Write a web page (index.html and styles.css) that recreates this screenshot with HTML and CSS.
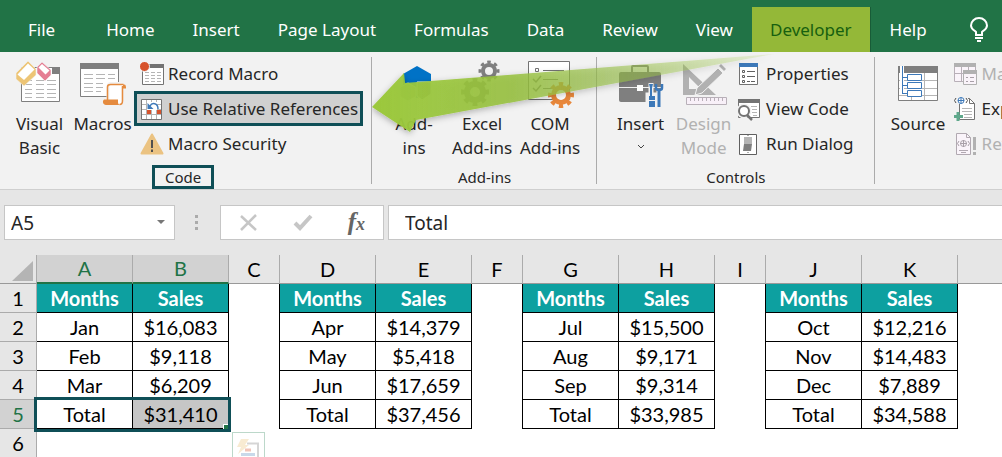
FILE: index.html
```
<!DOCTYPE html>
<html lang="en">
<head>
  <meta charset="UTF-8">
  <title>Monthly Sales - Excel</title>
  <link rel="stylesheet" href="styles.css">
</head>
<body>

<nav class="tabs">
  <a href="#" class="file">File</a>
  <a href="#">Home</a>
  <a href="#">Insert</a>
  <a href="#">Page Layout</a>
  <a href="#">Formulas</a>
  <a href="#">Data</a>
  <a href="#">Review</a>
  <a href="#">View</a>
  <a href="#" class="active">Developer</a>
  <a href="#">Help</a>
  <button class="tell-me" aria-label="Tell me what you want to do">
    <svg width="18" height="26" viewBox="0 0 18 26" fill="none" stroke="#fff" stroke-width="2">
      <path d="M6 18v-3C4 13 1 12 1 8.500a8 7.500 0 0 1 16 0C17 12 14 13 12 15v3z"/>
      <path d="M5 21h8M7 24h4"/>
    </svg>
  </button>
</nav>

<div class="ribbon">
  <section class="group code">
    <div class="group-body">
      <button class="big">
        <svg width="48" height="48" viewBox="0 0 48 48">
          <path d="M5.500 7.500h38v34h-38z" fill="#fff" stroke="#7f7f7f"/>
          <path d="M36 7h8v7h-8z" fill="#7f7f7f"/>
          <path d="M9 20.500h7m4 0h8m3 0h9M9 24.500h7m4 0h8m3 0h9M9 29.500h7m4 0h8m3 0h9M9 33.500h7m4 0h8m3 0h9M9 37.500h7m4 0h8m3 0h9" stroke="#b5b5b5"/>
          <path d="M0 13L12 1l8 8v6L8 26l-8-7z" fill="#edc576" stroke="#f2f2f2" stroke-width=".6"/>
          <path d="M1.500 14.500L12 3.500l6.500 6L8 20z" fill="#fff"/>
          <path d="M21 7l5-5 9 8v5l-6 6-8-8z" fill="#e57f94" stroke="#f2f2f2" stroke-width=".6"/>
          <path d="M22.500 7.500l3.500-3.500 7.500 6.500-4 4z" fill="#fff"/>
        </svg>
        <span>Visual<br>Basic</span>
      </button>
      <button class="big">
        <svg width="48" height="48" viewBox="0 0 48 48">
          <path d="M1.500 3.500h38v33h-38z" fill="#fff" stroke="#7f7f7f"/>
          <path d="M1 3h39v6H1z" fill="#7f7f7f"/>
          <path d="M5 14.500h9m3 0h9m3 0h7M5 18.500h9m3 0h9m3 0h7M5 23.500h9m3 0h7M5 27.500h9m3 0h7M5 31.500h9m3 0h5" stroke="#b5b5b5"/>
          <path d="M26 40h3V27c0-3 1-3.500 3-3.500h13.500c2 0 2 2 2 5H44v12c0 4-1 5-4 5H27c-3 0-3-5-1-5.500z" fill="#fff" stroke="#f2f2f2" stroke-width="3"/>
          <path d="M25 39.500h14V42c0 2 1 3 2 3H27c-3 0-4-4-2-5.500z" fill="#e58b3f"/>
          <path d="M44 24.500h1c2 0 2 2 2 4h-3z" fill="#e58b3f"/>
          <path d="M28.500 40V27c0-2 1-2.500 3-2.500h13M43.500 26v15c0 2-1 3.500-3 3.500" fill="none" stroke="#e58b3f" stroke-width="1.500"/>
        </svg>
        <span>Macros</span>
      </button>
      <div class="small-list">
        <button class="small">
          <svg width="24" height="24" viewBox="0 0 24 24">
            <path d="M2.500 2.500h21v20h-21z" fill="#fff" stroke="#737373"/>
            <path d="M2 2h22v4H2z" fill="#737373"/>
            <path d="M5 10.500h4m2 0h4m2 0h4M5 13.500h4m2 0h4m2 0h4M5 16.500h4m2 0h4m2 0h4M5 19.500h4m2 0h4m2 0h4" stroke="#b5b5b5"/>
            <circle cx="4.500" cy="4.500" r="5" fill="#d7532c" stroke="#f2f2f2"/>
          </svg>
          <span>Record Macro</span>
        </button>
        <button class="small marked">
          <svg width="24" height="24" viewBox="0 0 24 24">
            <path d="M1.500 2.500h20v20h-20z" fill="#fff" stroke="#737373"/>
            <path d="M6.500 3v19M11.500 3v19M16.500 3v19M2 7.500h19M2 12.500h19M2 17.500h19" stroke="#b5b5b5"/>
            <path d="M7 5h10v8H7z" fill="#fff"/>
            <path d="M7 13h4v4H7zM17 13h4v4h-4z" fill="#d7532c"/>
            <path d="M7.500 6v6h6z" fill="#3d79b9"/>
            <path d="M10 9c2-4 8-3 8 3" fill="none" stroke="#3d79b9" stroke-width="1.500"/>
          </svg>
          <span>Use Relative References</span>
        </button>
        <button class="small">
          <svg width="24" height="24" viewBox="0 0 24 24">
            <path d="M12 2.500L22.500 21.500h-21z" fill="#ebc382" stroke="#ebc382" stroke-width="2" stroke-linejoin="round"/>
            <path d="M12 8v8M12 17.500v2.500" stroke="#505050" stroke-width="2"/>
          </svg>
          <span>Macro Security</span>
        </button>
      </div>
    </div>
    <h2 class="marked-label">Code</h2>
  </section>

  <section class="group addins">
    <div class="group-body">
      <button class="big">
        <svg width="48" height="48" viewBox="0 0 48 48">
          <path d="M27 6l14 8v16l-14 8-14-8V14z" fill="#0072c6"/>
          <path d="M18 23l8 4.500v9L18 41l-8-4.500v-9z" fill="#a5a5a5" stroke="#f2f2f2"/>
          <path d="M27 22h14v12l-9 6-5-4z" fill="#7f7f7f" stroke="#f2f2f2"/>
        </svg>
        <span>Add-<br>ins</span>
      </button>
      <button class="big">
        <svg width="48" height="48" viewBox="0 0 48 48" fill="none" stroke="#7f7f7f">
          <circle cx="31" cy="11" r="6" stroke-width="4"/>
          <circle cx="31" cy="11" r="9" stroke-width="3" pathLength="16" stroke-dasharray="1 1" stroke-dashoffset=".5"/>
          <circle cx="17" cy="32" r="8" stroke-width="6"/>
          <circle cx="17" cy="32" r="12" stroke-width="4" pathLength="16" stroke-dasharray="1 1" stroke-dashoffset=".5"/>
        </svg>
        <span>Excel<br>Add-ins</span>
      </button>
      <button class="big">
        <svg width="48" height="48" viewBox="0 0 48 48">
          <path d="M2.500 1.500h41v38h-41z" fill="#fff" stroke="#737373"/>
          <path d="M9.500 8.500h3v3h-3zM17 10.500h21M17 19.500h15M17 28.500h9" fill="none" stroke="#737373"/>
          <path d="M7 19l3 3 5-6M7 28l3 3 5-6" fill="none" stroke="#737373" stroke-width="1.500"/>
          <circle cx="35" cy="35" r="7.500" fill="#fff" stroke="#e8873a" stroke-width="5"/>
          <circle cx="35" cy="35" r="11" fill="none" stroke="#e8873a" stroke-width="4" pathLength="16" stroke-dasharray="1 1" stroke-dashoffset=".5"/>
        </svg>
        <span>COM<br>Add-ins</span>
      </button>
    </div>
    <h2>Add-ins</h2>
    <svg class="arrow" width="420" height="90" viewBox="0 0 420 90" aria-hidden="true">
      <defs>
        <linearGradient id="fade" x1="0" x2="1">
          <stop offset="0" stop-color="#9bc83c"/>
          <stop offset=".12" stop-color="#9bc83c" stop-opacity=".93"/>
          <stop offset=".35" stop-color="#96c03c" stop-opacity=".85"/>
          <stop offset=".6" stop-color="#96be46" stop-opacity=".6"/>
          <stop offset="1" stop-color="#a5cf4c" stop-opacity=".15"/>
        </linearGradient>
        <filter id="shade" x="-5%" y="-10%" width="110%" height="130%">
          <feDropShadow dx="0" dy="2" stdDeviation="3" flood-color="#000" flood-opacity=".3"/>
        </filter>
      </defs>
      <path d="M0 55L32 21l1 10L402 2 44 68l-6 12z" fill="url(#fade)" filter="url(#shade)"/>
    </svg>
  </section>

  <section class="group controls">
    <div class="group-body">
      <button class="big">
        <svg width="48" height="48" viewBox="0 0 48 48">
          <path d="M15 12V7q0-1 1-1h14q1 0 1 1v5" fill="none" stroke="#7f7f7f" stroke-width="2"/>
          <rect x="2" y="12" width="42" height="30" rx="2" fill="#7f7f7f"/>
          <path d="M2 27.500h42" stroke="#f2f2f2"/>
          <path d="M20 25h6v6h-6z" fill="#fff"/>
          <path d="M34 23v14M31 35h6v12h-6zM42 30v17" fill="#f2f2f2" stroke="#f2f2f2" stroke-width="5"/>
          <path d="M32 24h4l-1 4v8h3v11h-6V36h1v-8z" fill="#3d79b9"/>
          <path d="M31 40.500h8" stroke="#f2f2f2"/>
          <path d="M39 24v4q0 2 3 2t3-2v-4" fill="none" stroke="#3d79b9" stroke-width="2.500"/>
          <path d="M42 29v18" stroke="#3d79b9" stroke-width="3"/>
        </svg>
        <span>Insert</span>
        <svg class="chevron" width="8" height="6" viewBox="0 0 8 6" fill="none" stroke="#444"><path d="M1 1l3 3 3-3"/></svg>
      </button>
      <button class="big" disabled>
        <svg width="48" height="48" viewBox="0 0 48 48">
          <path d="M3 4v31h33zM9 17l12 12H9z" fill="#b1b1b1" fill-rule="evenodd"/>
          <path d="M15 35l2-7L38 8l5 5-21 20z" fill="#b1b1b1" stroke="#f2f2f2"/>
          <path d="M39 6l2-2 5 5-2 2z" fill="#b1b1b1"/>
          <path d="M6.500 37.500h40v7h-40z" fill="#f8f0f8" stroke="#b8b0b8"/>
          <path d="M10.500 38v3m4-3v3m4-3v3m4-3v3m4-3v3m4-3v3m4-3v3m4-3v3m4-3v3" stroke="#b8b0b8"/>
        </svg>
        <span>Design<br>Mode</span>
      </button>
      <div class="small-list">
        <button class="small">
          <svg width="24" height="24" viewBox="0 0 24 24">
            <path d="M1.500 2.500h18v20h-18z" fill="#fff" stroke="#737373"/>
            <path d="M1 1h19v4H1z" fill="#3d79b9"/>
            <path d="M9 9.500h8M9 14.500h8M9 19.500h3m1 0h4" stroke="#606060"/>
            <path d="M4.500 8.500h2v2h-2zM4.500 13.500h2v2h-2zM4.500 18.500h2v2h-2z" fill="none" stroke="#606060"/>
          </svg>
          <span>Properties</span>
        </button>
        <button class="small">
          <svg width="24" height="24" viewBox="0 0 24 24">
            <path d="M.5 2.500h21v18H.5z" fill="#fff" stroke="#737373"/>
            <path d="M0 2h22v4H0z" fill="#737373"/>
            <path d="M13 9.500h6M14 12.500h5M14 15.500h5M15 18.500h4" stroke="#b5b5b5"/>
            <circle cx="6" cy="14" r="7.500" fill="#f2f2f2"/>
            <circle cx="6" cy="14" r="5" fill="#fff" stroke="#737373" stroke-width="2"/>
            <path d="M9 18l5 5" stroke="#737373" stroke-width="2.500"/>
          </svg>
          <span>View Code</span>
        </button>
        <button class="small">
          <svg width="24" height="24" viewBox="0 0 24 24">
            <path d="M1.500 2.500h17v20h-17z" fill="#fff" stroke="#606060"/>
            <path d="M6 5h8v7H6z" fill="#b5b5b5"/>
            <path d="M6 12h8l-1 7H5z" fill="#7f7f7f"/>
            <path d="M10 3v1M10 20v1" stroke="#606060"/>
          </svg>
          <span>Run Dialog</span>
        </button>
      </div>
    </div>
    <h2>Controls</h2>
  </section>

  <section class="group xml">
    <div class="group-body">
      <button class="big">
        <svg width="48" height="48" viewBox="0 0 48 48">
          <path d="M4.500 6.500h39v34h-39z" fill="#fff" stroke="#7f7f7f"/>
          <path d="M4 6h40v7H4z" fill="#7f7f7f"/>
          <path d="M30.500 13v27M17.500 36v4M5 20.500h38M5 28.500h38M5 35.500h38" stroke="#b5b5b5"/>
          <path d="M8 6v27" stroke="#fff" stroke-width="4"/>
          <path d="M8.500 6v27M8 17.500h5M8 25.500h5M8 33.500h5" fill="none" stroke="#3d79b9"/>
          <path d="M13.500 14.500h14v6h-14zM13.500 22.500h14v6h-14zM13.500 30.500h14v6h-14z" fill="#fff" stroke="#3d79b9"/>
        </svg>
        <span>Source</span>
      </button>
      <div class="small-list">
        <button class="small" disabled>
          <svg width="24" height="24" viewBox="0 0 24 24">
            <path d="M.5 2.500h21v17H.5z" fill="#faf4fa" stroke="#b8b0b8"/>
            <path d="M0 1h22v4H0z" fill="#b1b1b1"/>
            <path d="M7.500 5v14M14.500 5v14M1 11.500h20" stroke="#b8b0b8"/>
            <path d="M9.500 9.500h13v13h-13z" fill="#faf4fa" stroke="#b1b1b1"/>
            <path d="M9 8h14v4H9z" fill="#b1b1b1"/>
            <path d="M12 15.500h2m2 0h4M12 19.500h2m2 0h4" stroke="#a8a0a8"/>
          </svg>
          <span>Map Properties</span>
        </button>
        <button class="small">
          <svg width="24" height="24" viewBox="0 0 24 24">
            <path d="M5.500 7v15.500h15V6.500l-5-5H14" fill="#fff" stroke="#737373"/>
            <path d="M15.500 1.500v5h5" fill="none" stroke="#737373"/>
            <path d="M8 11.500h10M8 14.500h10M10 17.500h8M10 20.500h8" stroke="#b5b5b5"/>
            <circle cx="7" cy="3.500" r="3" fill="#fff" stroke="#3d79b9"/>
            <path d="M4 3.500h6M7 .5v6" stroke="#3d79b9"/>
            <path d="M2 1L.5 3.500 2 6M12 1l1.500 2.500L12 6" fill="none" stroke="#505050"/>
            <path d="M4 15v9M0 19.500h9" stroke="#5fa88b" stroke-width="3"/>
          </svg>
          <span>Expansion Packs</span>
        </button>
        <button class="small" disabled>
          <svg width="24" height="24" viewBox="0 0 24 24">
            <path d="M2.500 1.500h10l4 4v17h-14z" fill="#faf4fa" stroke="#b1a9b1"/>
            <path d="M12.500 1.500v4h4M5 18.500h9M7 20.500h5" fill="none" stroke="#b1a9b1"/>
            <circle cx="9.500" cy="11.500" r="3" fill="none" stroke="#a8a0a8"/>
            <path d="M6 11.500h7M9.500 8v7M5 9l-1.500 2.500L5 14M14 9l1.500 2.500L14 14" fill="none" stroke="#a8a0a8"/>
            <path d="M20.500 5v13M20.500 20v3" stroke="#b1b1b1" stroke-width="3"/>
          </svg>
          <span>Refresh Data</span>
        </button>
      </div>
    </div>
  </section>
</div>

<div class="formula-bar">
  <div class="name-box">
    <input type="text" value="A5" aria-label="Name box">
    <svg width="8" height="5" viewBox="0 0 8 5"><path d="M0 0h8L4 4z" fill="#777"/></svg>
  </div>
  <div class="dots"><i></i><i></i><i></i></div>
  <div class="formula-buttons">
    <button aria-label="Cancel"><svg width="20" height="18" viewBox="0 0 20 18" fill="none" stroke="#c6c6c6" stroke-width="2.500"><path d="M2 2l15 14M17 1L2 16"/></svg></button>
    <button aria-label="Enter"><svg width="20" height="18" viewBox="0 0 20 18" fill="none" stroke="#c6c6c6" stroke-width="4"><path d="M2 9l5 5L18 2"/></svg></button>
    <button class="fx" aria-label="Insert function">f<sub>x</sub></button>
  </div>
  <input class="formula" type="text" value="Total" aria-label="Formula">
</div>

<table class="sheet">
  <colgroup>
    <col class="w-head">
    <col class="w-data"><col class="w-data"><col class="w-gap">
    <col class="w-data"><col class="w-data"><col class="w-gap">
    <col class="w-data"><col class="w-data"><col class="w-gap">
    <col class="w-data"><col class="w-data"><col>
  </colgroup>
  <thead>
  <tr>
    <th class="corner"><svg width="21" height="20" viewBox="0 0 21 20"><path d="M21 0v20H0z" fill="#b4b4b4"/></svg></th>
    <th class="on">A</th><th class="on">B</th><th>C</th><th>D</th><th>E</th><th>F</th><th>G</th><th>H</th><th>I</th><th>J</th><th>K</th><th class="last"></th>
  </tr>
  </thead>
  <tbody>
  <tr class="titles"><th>1</th><td>Months</td><td>Sales</td><td class="gap"></td><td>Months</td><td>Sales</td><td class="gap"></td><td>Months</td><td>Sales</td><td class="gap"></td><td>Months</td><td>Sales</td><td class="blank"></td></tr>
  <tr><th>2</th><td>Jan</td><td>$16,083</td><td class="gap"></td><td>Apr</td><td>$14,379</td><td class="gap"></td><td>Jul</td><td>$15,500</td><td class="gap"></td><td>Oct</td><td>$12,216</td><td class="blank"></td></tr>
  <tr><th>3</th><td>Feb</td><td>$9,118</td><td class="gap"></td><td>May</td><td>$5,418</td><td class="gap"></td><td>Aug</td><td>$9,171</td><td class="gap"></td><td>Nov</td><td>$14,483</td><td class="blank"></td></tr>
  <tr><th>4</th><td>Mar</td><td>$6,209</td><td class="gap"></td><td>Jun</td><td>$17,659</td><td class="gap"></td><td>Sep</td><td>$9,314</td><td class="gap"></td><td>Dec</td><td>$7,889</td><td class="blank"></td></tr>
  <tr><th class="on">5</th><td class="start">Total<div class="selection"></div></td><td class="picked">$31,410</td><td class="gap anchor">
    <button class="quick" aria-label="Quick analysis">
      <svg width="31" height="26" viewBox="0 0 31 26">
        <path d="M14 7.500h11V26" fill="none" stroke="#d5d5d5" stroke-width="2"/>
        <path d="M8 3h8l-4 6h4L5 18l3-7H4z" fill="#f8ebd2"/>
        <path d="M12 14h6" stroke="#f1c4b8" stroke-width="3"/>
        <path d="M8 18.500h14" stroke="#c8d9ea" stroke-width="3"/>
        <path d="M8 22.500h12" stroke="#cfe3da" stroke-width="3"/>
      </svg>
    </button></td><td>Total</td><td>$37,456</td><td class="gap"></td><td>Total</td><td>$33,985</td><td class="gap"></td><td>Total</td><td>$34,588</td><td class="blank"></td></tr>
  <tr><th>6</th><td class="blank" colspan="12"></td></tr>
  </tbody>
</table>

</body>
</html>
```

FILE: styles.css
```
* {
  box-sizing: border-box;
}

body {
  margin: 0;
  height: 100vh;
  overflow: hidden;
  background-color: #fff;
  color: #262626;
  font-family: "Noto Sans", "Open Sans", sans-serif;
  font-size: 17px;
}

button, input {
  font: inherit;
  color: inherit;
  background: none;
  border: none;
  padding: 0;
  margin: 0;
}

svg {
  display: block;
  flex: none;
}

/* tabs */
.tabs {
  display: flex;
  height: 52px;
  padding: 7px 0 0 9px;
  background-color: #217346;
}

.tabs a {
  padding: 0 19px;
  color: #fff;
  line-height: 45px;
  text-decoration: none;
  white-space: nowrap;
}

.tabs .file {
  padding-right: 32px;
}

.tabs .active {
  background-color: #94b838;
  color: #17600f;
  padding: 0 18px;
  border-right: 1px solid #185c37;
}

.tell-me {
  margin-left: 24px;
}

/* ribbon */
.ribbon {
  display: flex;
  height: 138px;
  overflow: hidden;
  background-color: #f2f2f2;
  border-bottom: 1px solid #cfcfcf;
}

.group {
  position: relative;
  flex: none;
  display: flex;
  flex-direction: column;
  align-items: center;
  padding: 4px 0 0;
}

.group + .group::before {
  content: "";
  position: absolute;
  left: -1px;
  top: 5px;
  bottom: 5px;
  width: 1px;
  background-color: #ababab;
}

.group-body {
  display: flex;
  height: 109px;
  align-self: stretch;
}

.group h2 {
  margin: 0;
  padding: 0 10px;
  font-size: 15px;
  font-weight: normal;
  line-height: 24px;
}

.group .marked-label {
  margin-right: 6px;
  border: 3px solid #0f4f57;
  line-height: 18px;
}

.code .group-body {
  padding: 0 9px 0 8px;
}

.addins .group-body {
  padding: 0 13px 0 8px;
}

.controls .group-body {
  padding: 0 18px 0 12px;
}

.xml .group-body {
  padding-left: 8px;
}

.big {
  display: flex;
  flex-direction: column;
  align-items: center;
  min-width: 63px;
  padding-top: 4px;
  line-height: 24px;
  text-align: center;
  white-space: nowrap;
}

.big span {
  margin-top: 4px;
}

.addins .big {
  width: 68px;
}

.xml .big {
  width: 71px;
}

.chevron {
  margin-top: 8px;
}

button:disabled {
  color: #b1b1b1;
}

.small-list {
  display: flex;
  flex-direction: column;
}

.small {
  display: flex;
  align-items: center;
  gap: 4px;
  height: 35px;
  padding: 0 6px;
  border: 0 solid #0f4f57;
  white-space: nowrap;
}

.code .small.marked {
  padding: 0 2px 0 3px;
  background-color: #d0d0d0;
  border-width: 3px;
}

.controls .small {
  padding: 0 3px;
}

.xml .small {
  padding: 0;
}

.arrow {
  position: absolute;
  left: 0;
  top: 0;
  pointer-events: none;
}

/* the arrow reaches over the next group */
.addins {
  z-index: 1;
}

/* formula bar */
.formula-bar {
  display: flex;
  height: 65px;
  padding: 15px 0 15px 4px;
  background-color: #e6e6e6;
  font-size: 19px;
}

.name-box, .formula-buttons, .formula {
  background-color: #fff;
  border: 1px solid #c6c6c6;
}

.name-box {
  display: flex;
  align-items: center;
  width: 171px;
  padding: 0 9px 0 6px;
}

.name-box input {
  flex: 1;
  min-width: 0;
}

.dots {
  display: flex;
  flex-direction: column;
  justify-content: center;
  gap: 3px;
  margin: 0 22px 0 20px;
}

.dots i {
  width: 3px;
  height: 3px;
  background-color: #ababab;
}

.formula-buttons {
  display: flex;
  align-items: center;
  justify-content: space-between;
  width: 164px;
  padding: 0 18px;
}

.fx {
  color: #666;
  font-family: "Liberation Serif", serif;
  font-size: 25px;
  font-style: italic;
  font-weight: bold;
  line-height: 30px;
}

.fx sub {
  font-size: 18px;
  vertical-align: baseline;
}

.formula {
  flex: 1;
  min-width: 0;
  margin-left: 4px;
  padding-left: 16px;
  border-right: none;
}

/* sheet */
.sheet {
  width: 100%;
  table-layout: fixed;
  border-collapse: separate;
  border-spacing: 0;
  color: #000;
  font-family: Lato, sans-serif;
  font-size: 20px;
  line-height: 28px;
}

.w-head {
  width: 37px;
}

.w-data {
  width: 96px;
}

.w-gap {
  width: 51px;
}

.sheet th, .sheet td {
  height: 29px;
  padding: 0;
  text-align: center;
  border: 0 solid #000;
  border-width: 0 1px 1px 0;
}

.sheet th {
  background-color: #e6e6e6;
  border-color: #ababab;
  font-weight: normal;
}

.sheet thead th {
  border-bottom-color: #999;
}

.sheet thead .last {
  border-right: none;
}

.sheet th.on {
  background-color: #d2d2d2;
  color: #217346;
}

.sheet thead .on {
  border-bottom: 2px solid #217346;
  line-height: 27px;
}

.corner svg {
  margin: 3px 3px 0 auto;
}

.sheet .titles td {
  background-color: #0da0a0;
  color: #fff;
  font-weight: bold;
}

.sheet .titles .gap {
  background: none;
}

.sheet .gap {
  border-bottom: none;
}

.sheet .titles .blank, .sheet .blank {
  background: none;
  border: none;
}

.start, .anchor {
  position: relative;
}

/* frame round A5:B5, it reaches 3px past the cells */
.selection {
  position: absolute;
  left: -3px;
  top: -3px;
  width: calc(200% + 7px);
  height: 35px;
  border: 3px solid #0f4f57;
}

.selection::after {
  content: "";
  position: absolute;
  right: 0;
  bottom: 0;
  width: 4px;
  height: 4px;
  background-color: #217346;
  border: solid #fff;
  border-width: 1px 0 0 1px;
}

.sheet .picked {
  background-color: #c6c6c6;
}

.quick {
  position: absolute;
  left: 3px;
  top: 32px;
  width: 33px;
  height: 33px;
  background-color: #fff;
  border: 1px solid #bcd8ca;
}
```
